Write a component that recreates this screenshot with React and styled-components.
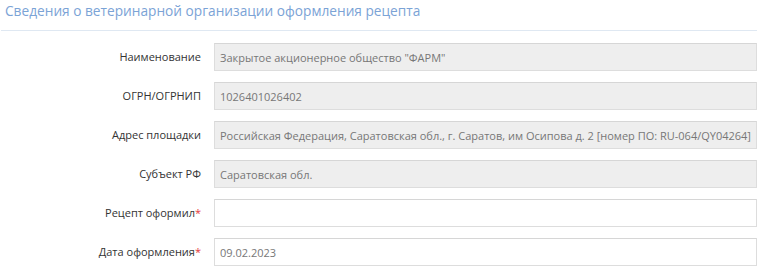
import React from 'react'
import styled, { createGlobalStyle } from 'styled-components'

const GlobalStyle = createGlobalStyle`
  html, body {
    margin: 0;
    padding: 0;
    background: #fff;
  }
  body {
    font-family: "Open Sans", "Liberation Sans", sans-serif;
    font-size: 11px;
    color: #333;
  }
`

const Section = styled.section`
  width: 758px;
  overflow: hidden;
`

const Title = styled.h3`
  margin: 0 1px;
  padding: 0 0 0 4px;
  height: 30px;
  line-height: 22px;
  font-size: 13.7px;
  font-weight: 400;
  color: #7ba3d6;
  border-bottom: 1px solid #dfe8f2;
`

const Form = styled.div`
  display: flex;
  flex-direction: column;
  gap: 11px;
  padding-top: 12px;
`

const Row = styled.div`
  display: grid;
  grid-template-columns: 201px 1fr;
  column-gap: 13px;
  align-items: center;
`

const Label = styled.label`
  text-align: right;
  color: #333;
  line-height: 16px;
  white-space: nowrap;
`

const Required = styled.span`
  color: #e4393c;
`

const Field = styled.div`
  box-sizing: border-box;
  height: 28px;
  padding: 0 5px;
  display: flex;
  align-items: center;
  white-space: nowrap;
  overflow: hidden;
  color: #777;
  background: ${p => (p.readOnly ? '#eeeeee' : '#fff')};
  border: 1px solid #ddd;
  border-top-color: #d6d6d6;
  margin-right: 1px;
`

const rows = [
  { label: 'Наименование', value: 'Закрытое акционерное общество "ФАРМ"', readOnly: true },
  { label: 'ОГРН/ОГРНИП', value: '1026401026402', readOnly: true },
  { label: 'Адрес площадки', value: 'Российская Федерация, Саратовская обл., г. Саратов, им Осипова д. 2 [номер ПО: RU-064/QY04264]', readOnly: true },
  { label: 'Субъект РФ', value: 'Саратовская обл.', readOnly: true },
  { label: 'Рецепт оформил', value: '', required: true },
  { label: 'Дата оформления', value: '09.02.2023', required: true }
]

export default function App () {
  return (
    <>
      <GlobalStyle />
      <Section>
        <Title>Сведения о ветеринарной организации оформления рецепта</Title>
        <Form>
          {rows.map(row => (
            <Row key={row.label}>
              <Label>
                {row.label}
                {row.required && <Required>*</Required>}
              </Label>
              <Field readOnly={row.readOnly}>{row.value}</Field>
            </Row>
          ))}
        </Form>
      </Section>
    </>
  )
}
